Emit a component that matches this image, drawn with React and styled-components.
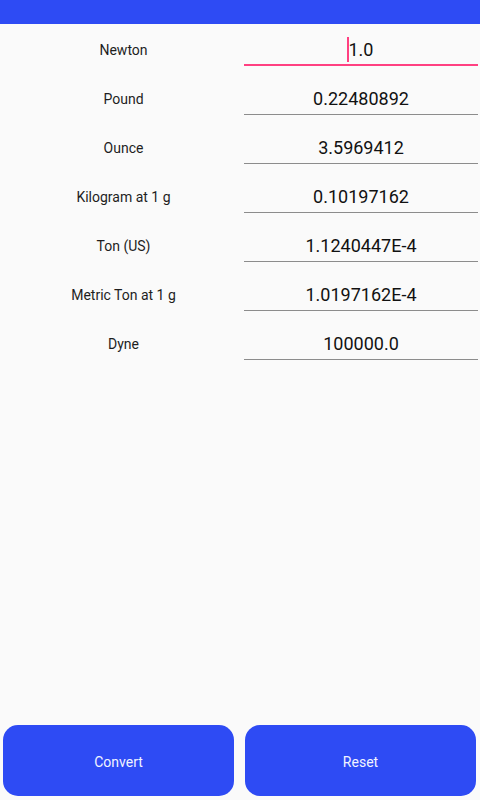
import React from "react";
import styled, { createGlobalStyle } from "styled-components";

const Global = createGlobalStyle`
  html, body { margin: 0; padding: 0; background: #fafafa; }
  body { font-family: Roboto, "Noto Sans", "Liberation Sans", sans-serif; }
  * { box-sizing: border-box; }
`;

const Page = styled.div`
  width: 480px;
  height: 800px;
  display: flex;
  flex-direction: column;
  background: #fafafa;
  overflow: hidden;
`;

const StatusBar = styled.div`
  height: 24px;
  flex: none;
  background: #2e4bf4;
`;

const List = styled.div`
  display: flex;
  flex-direction: column;
`;

const Row = styled.div`
  height: 49px;
  display: grid;
  grid-template-columns: 1fr 1fr;
  align-items: stretch;
`;

const Label = styled.div`
  display: flex;
  align-items: center;
  justify-content: center;
  padding-left: 7px;
  padding-top: 3px;
  font-size: 14px;
  color: #1e1e1e;
`;

const Field = styled.div`
  margin: 0 2px 0 4px;
  height: 42px;
  border-bottom: ${(p) => (p.$focused ? "2px solid #ff4081" : "1px solid #8c8c8c")};
  display: flex;
  align-items: center;
  justify-content: center;
  padding-top: ${(p) => (p.$focused ? "11px" : "9px")};
  font-size: 18px;
  color: #111;
`;

const Caret = styled.span`
  display: inline-block;
  width: 2px;
  height: 25px;
  margin-left: -2px;
  background: #ff4081;
  vertical-align: middle;
`;

const Spacer = styled.div`
  flex: 1;
`;

const ButtonBar = styled.div`
  display: flex;
  gap: 11px;
  padding: 0 4px 4px 3px;
`;

const Button = styled.button`
  flex: 1;
  height: 71px;
  border: none;
  border-radius: 15px;
  background: #2e4bf4;
  color: #f2f4ff;
  font-family: Roboto, "Noto Sans", "Liberation Sans", sans-serif;
  font-size: 14px;
  padding: 2px 0 0;
`;

const units = [
  ["Newton", "1.0"],
  ["Pound", "0.22480892"],
  ["Ounce", "3.5969412"],
  ["Kilogram at 1 g", "0.10197162"],
  ["Ton (US)", "1.1240447E-4"],
  ["Metric Ton at 1 g", "1.0197162E-4"],
  ["Dyne", "100000.0"],
];

export default function App() {
  return (
    <Page>
      <Global />
      <StatusBar />
      <List>
        {units.map(([name, value], i) => (
          <Row key={name}>
            <Label>{name}</Label>
            <Field $focused={i === 0}>
              {i === 0 && <Caret />}
              {value}
            </Field>
          </Row>
        ))}
      </List>
      <Spacer />
      <ButtonBar>
        <Button>Convert</Button>
        <Button>Reset</Button>
      </ButtonBar>
    </Page>
  );
}
